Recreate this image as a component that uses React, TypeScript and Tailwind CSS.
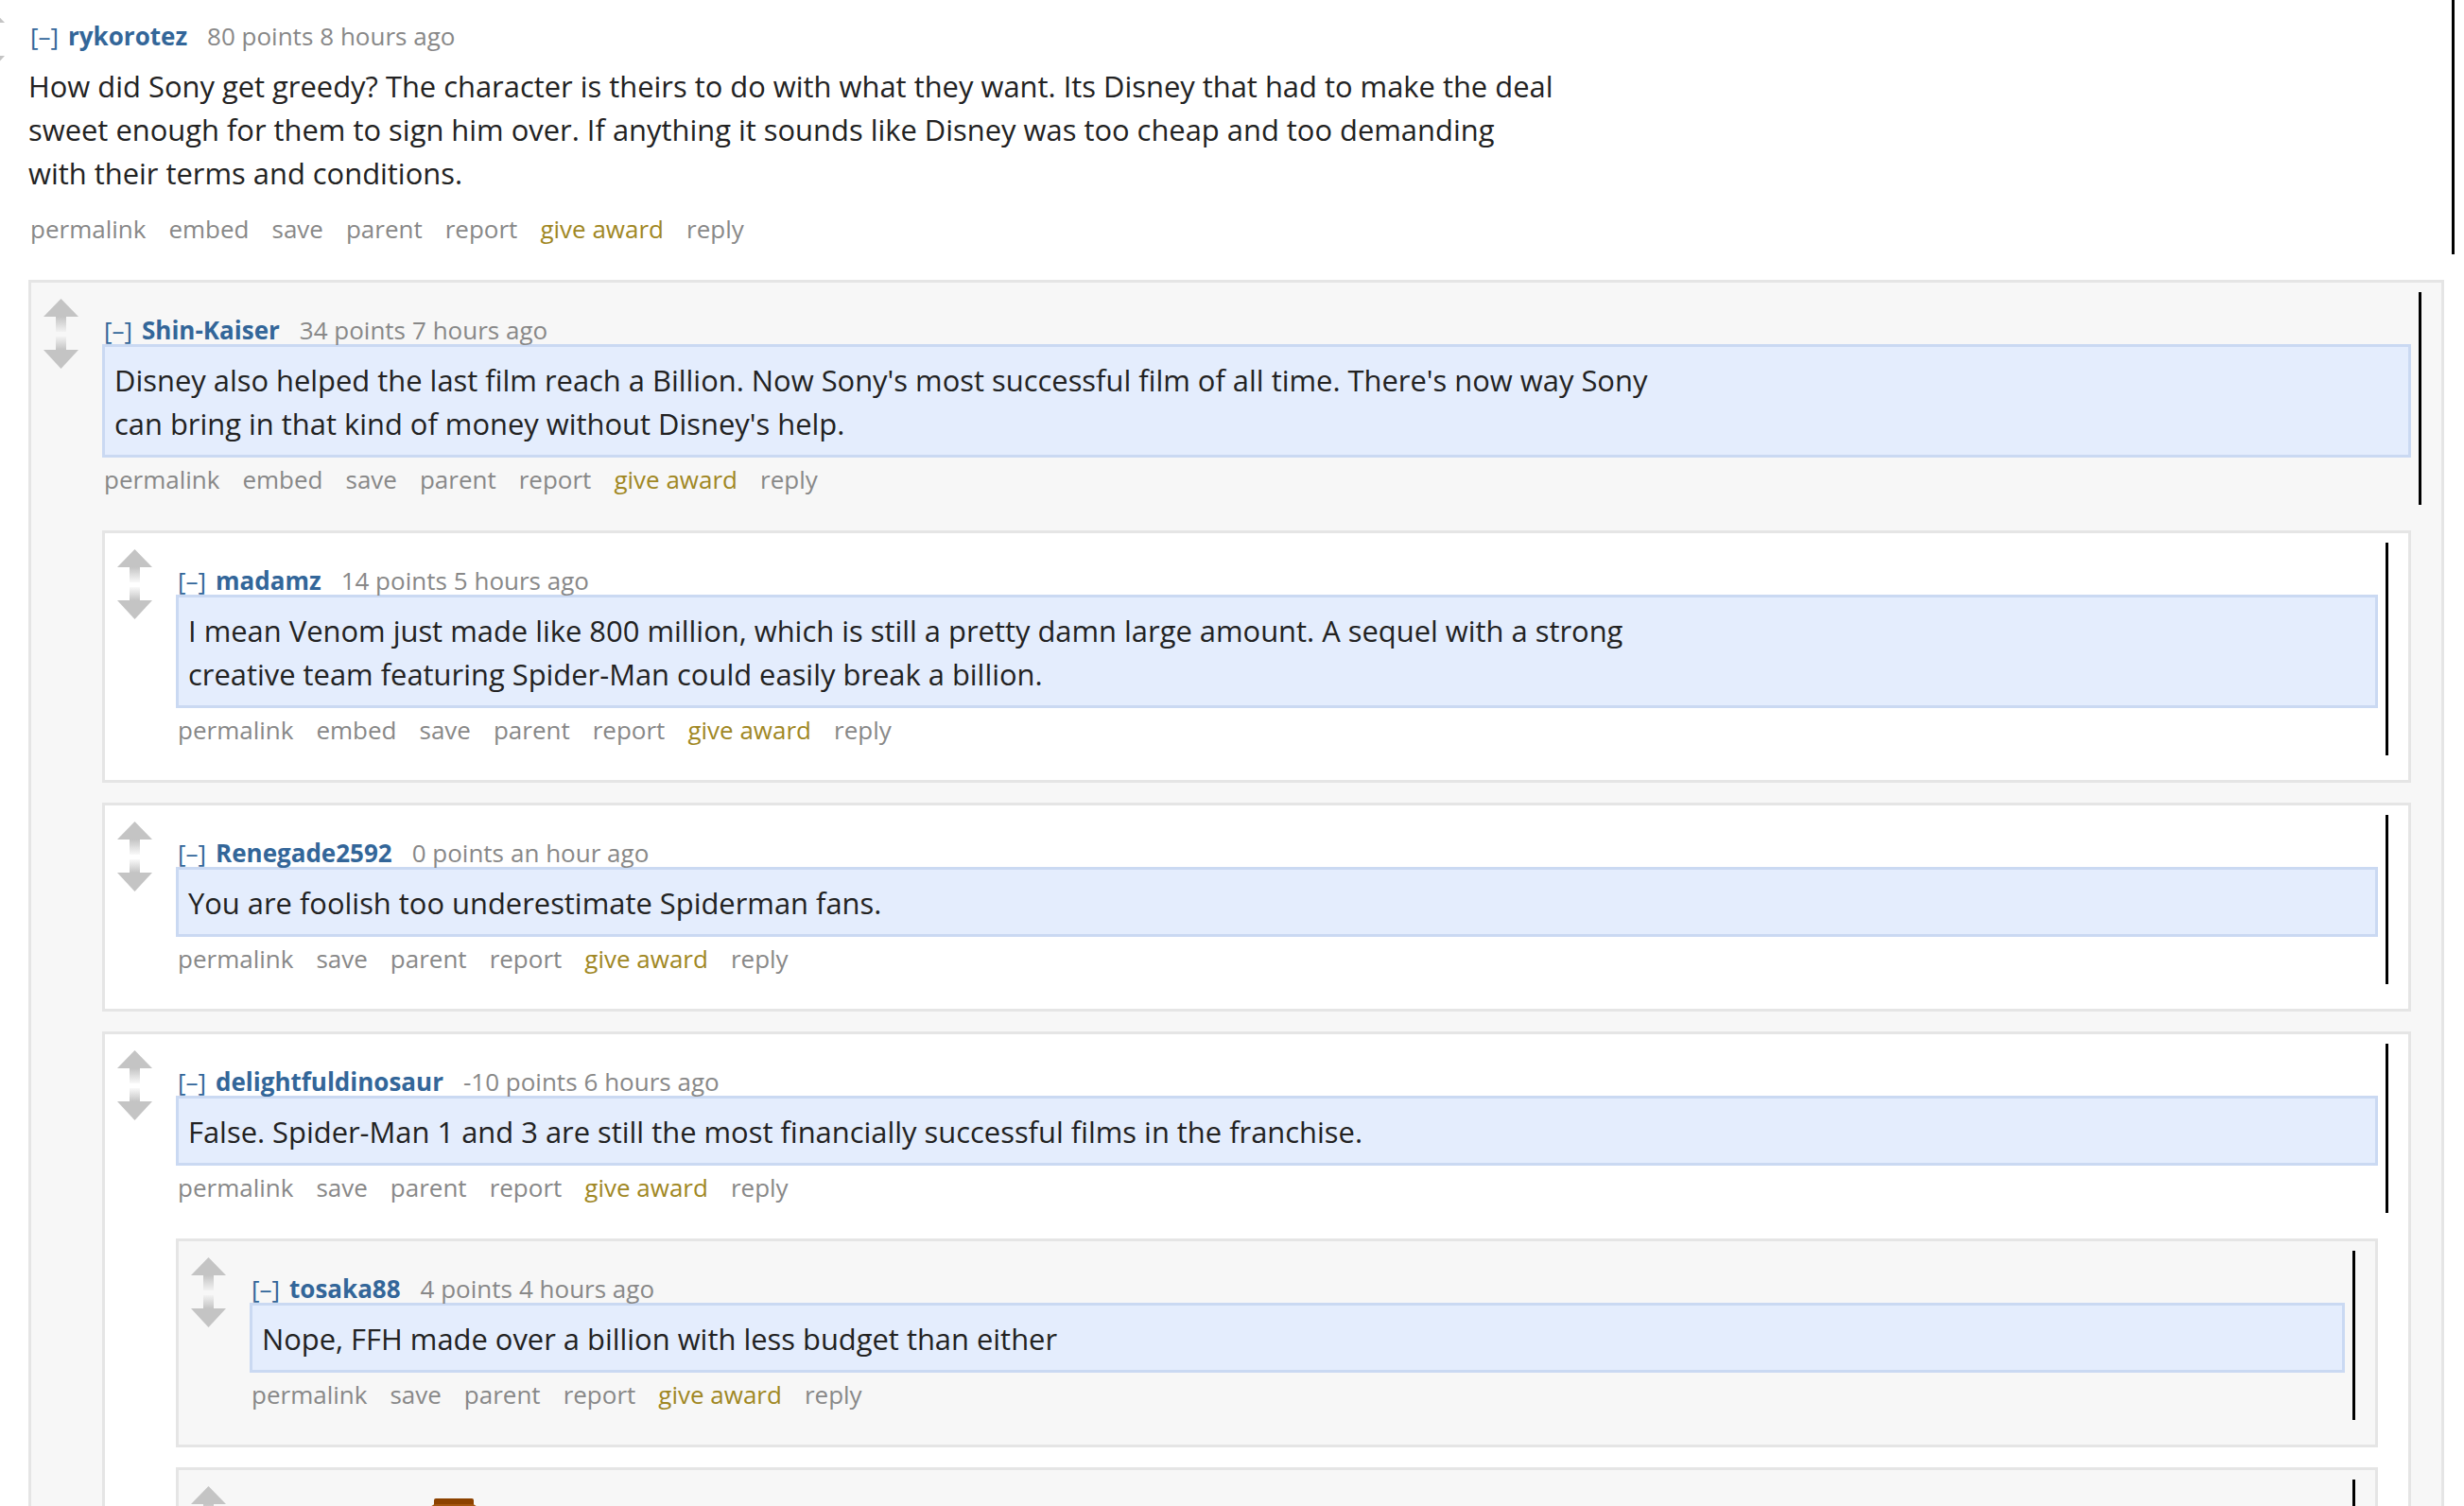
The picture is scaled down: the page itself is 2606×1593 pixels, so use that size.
import React from 'react';

type Comment = {
  id: string;
  author: string;
  score: string;
  time: string;
  lines: string[];
  embed?: boolean;
  highlight?: boolean;
  shade?: boolean;
  flair?: boolean;
  children?: Comment[];
};

const thread: Comment = {
  id: 'c1',
  author: 'rykorotez',
  score: '80 points',
  time: '8 hours ago',
  embed: true,
  lines: [
    'How did Sony get greedy? The character is theirs to do with what they want. Its Disney that had to make the deal',
    'sweet enough for them to sign him over. If anything it sounds like Disney was too cheap and too demanding',
    'with their terms and conditions.',
  ],
  children: [
    {
      id: 'c2',
      author: 'Shin-Kaiser',
      score: '34 points',
      time: '7 hours ago',
      embed: true,
      highlight: true,
      shade: true,
      lines: [
        "Disney also helped the last film reach a Billion. Now Sony's most successful film of all time. There's now way Sony",
        "can bring in that kind of money without Disney's help.",
      ],
      children: [
        {
          id: 'c3',
          author: 'madamz',
          score: '14 points',
          time: '5 hours ago',
          embed: true,
          highlight: true,
          lines: [
            'I mean Venom just made like 800 million, which is still a pretty damn large amount. A sequel with a strong',
            'creative team featuring Spider-Man could easily break a billion.',
          ],
        },
        {
          id: 'c4',
          author: 'Renegade2592',
          score: '0 points',
          time: 'an hour ago',
          highlight: true,
          lines: ['You are foolish too underestimate Spiderman fans.'],
        },
        {
          id: 'c5',
          author: 'delightfuldinosaur',
          score: '-10 points',
          time: '6 hours ago',
          highlight: true,
          lines: ['False. Spider-Man 1 and 3 are still the most financially successful films in the franchise.'],
          children: [
            {
              id: 'c6',
              author: 'tosaka88',
              score: '4 points',
              time: '4 hours ago',
              highlight: true,
              shade: true,
              lines: ['Nope, FFH made over a billion with less budget than either'],
            },
            {
              id: 'c7',
              author: 'MrSpidey9',
              score: '3 points',
              time: '3 hours ago',
              highlight: true,
              shade: true,
              flair: true,
              lines: ['And that was with Disney.'],
            },
          ],
        },
      ],
    },
  ],
};

const VoteArrows = () => (
  <svg width="37" height="74" viewBox="0 0 37 74">
    <defs>
      <linearGradient id="upFade" x1="0" y1="0" x2="0" y2="1">
        <stop offset="0" stopColor="#c4c4c4" />
        <stop offset="1" stopColor="#c4c4c4" stopOpacity="0.1" />
      </linearGradient>
      <linearGradient id="downFade" x1="0" y1="0" x2="0" y2="1">
        <stop offset="0" stopColor="#c4c4c4" stopOpacity="0.1" />
        <stop offset="1" stopColor="#c4c4c4" />
      </linearGradient>
    </defs>
    <polygon points="18.5,0 37,19 0,19" fill="#c4c4c4" />
    <rect x="13" y="19" width="11" height="16" fill="url(#upFade)" />
    <rect x="13" y="40" width="11" height="14" fill="url(#downFade)" />
    <polygon points="0,54 37,54 18.5,74" fill="#c4c4c4" />
  </svg>
);

const FlairIcon = () => (
  <svg width="50" height="40" viewBox="0 0 50 40" className="ml-[12px] shrink-0">
    <rect x="4" y="0" width="42" height="9" rx="2" fill="#8c4200" />
    <rect x="0" y="6" width="50" height="34" rx="6" fill="#a4560f" />
  </svg>
);

const CommentBox = ({ c, className = '' }: { c: Comment; className?: string }) => {
  const buttons = ['permalink', ...(c.embed ? ['embed'] : []), 'save', 'parent', 'report', 'give award', 'reply'];

  return (
    <div
      className={`flex border-[3px] border-[#e5e5e5] pl-[13px] pr-[21px] pt-[10px] pb-[26px] ${
        c.shade ? 'bg-[#f7f7f7]' : 'bg-white'
      } ${className}`}
    >
      <div className="w-[37px] shrink-0 pt-[7px]">
        <VoteArrows />
      </div>

      <div className="ml-[25px] min-w-0 flex-1">
        {/* entry */}
        <div className="border-r-[3px] border-black pr-[8px] pt-[25px] pb-[12px]">
          <div className="flex h-[30px] items-center whitespace-nowrap pl-[2px] text-[26px] leading-[30px]">
            <span className="text-[#369]">[–]</span>
            <span className="ml-[10px] font-bold text-[#369]">{c.author}</span>
            {c.flair && <FlairIcon />}
            <span className="ml-[21px] text-[#888]">{c.score}</span>
            <span className="ml-[7px] text-[#888]">{c.time}</span>
          </div>

          <div
            className={`pt-[12px] pb-[10px] text-[30.9px] leading-[46px] text-[#222] ${
              c.highlight ? 'border-[3px] border-[#cad9f2] bg-[#e4edfd] pl-[10px]' : 'border-y-[3px] border-transparent'
            }`}
          >
            {c.lines.map((line, i) => (
              <span key={i} className="block whitespace-nowrap">
                {line}
              </span>
            ))}
          </div>

          <div className="mt-[8px] flex gap-[24px] whitespace-nowrap pl-[2px] text-[26px] leading-[30px]">
            {buttons.map(b => (
              <span key={b} className={b === 'give award' ? 'text-[#a08723]' : 'text-[#888]'}>
                {b}
              </span>
            ))}
          </div>
        </div>

        {c.children && (
          <div className="mr-[11px]">
            {c.children.map(ch => (
              <CommentBox key={ch.id} c={ch} className="mt-[21px] first:mt-[27px]" />
            ))}
          </div>
        )}
      </div>
    </div>
  );
};

export default function App() {
  return (
    <div className="h-[1593px] w-[2606px] overflow-hidden bg-white font-['Open_Sans',sans-serif]">
      <div className="-ml-[48px] -mt-[15px] w-[2668px]">
        <CommentBox c={thread} />
      </div>
    </div>
  );
}
